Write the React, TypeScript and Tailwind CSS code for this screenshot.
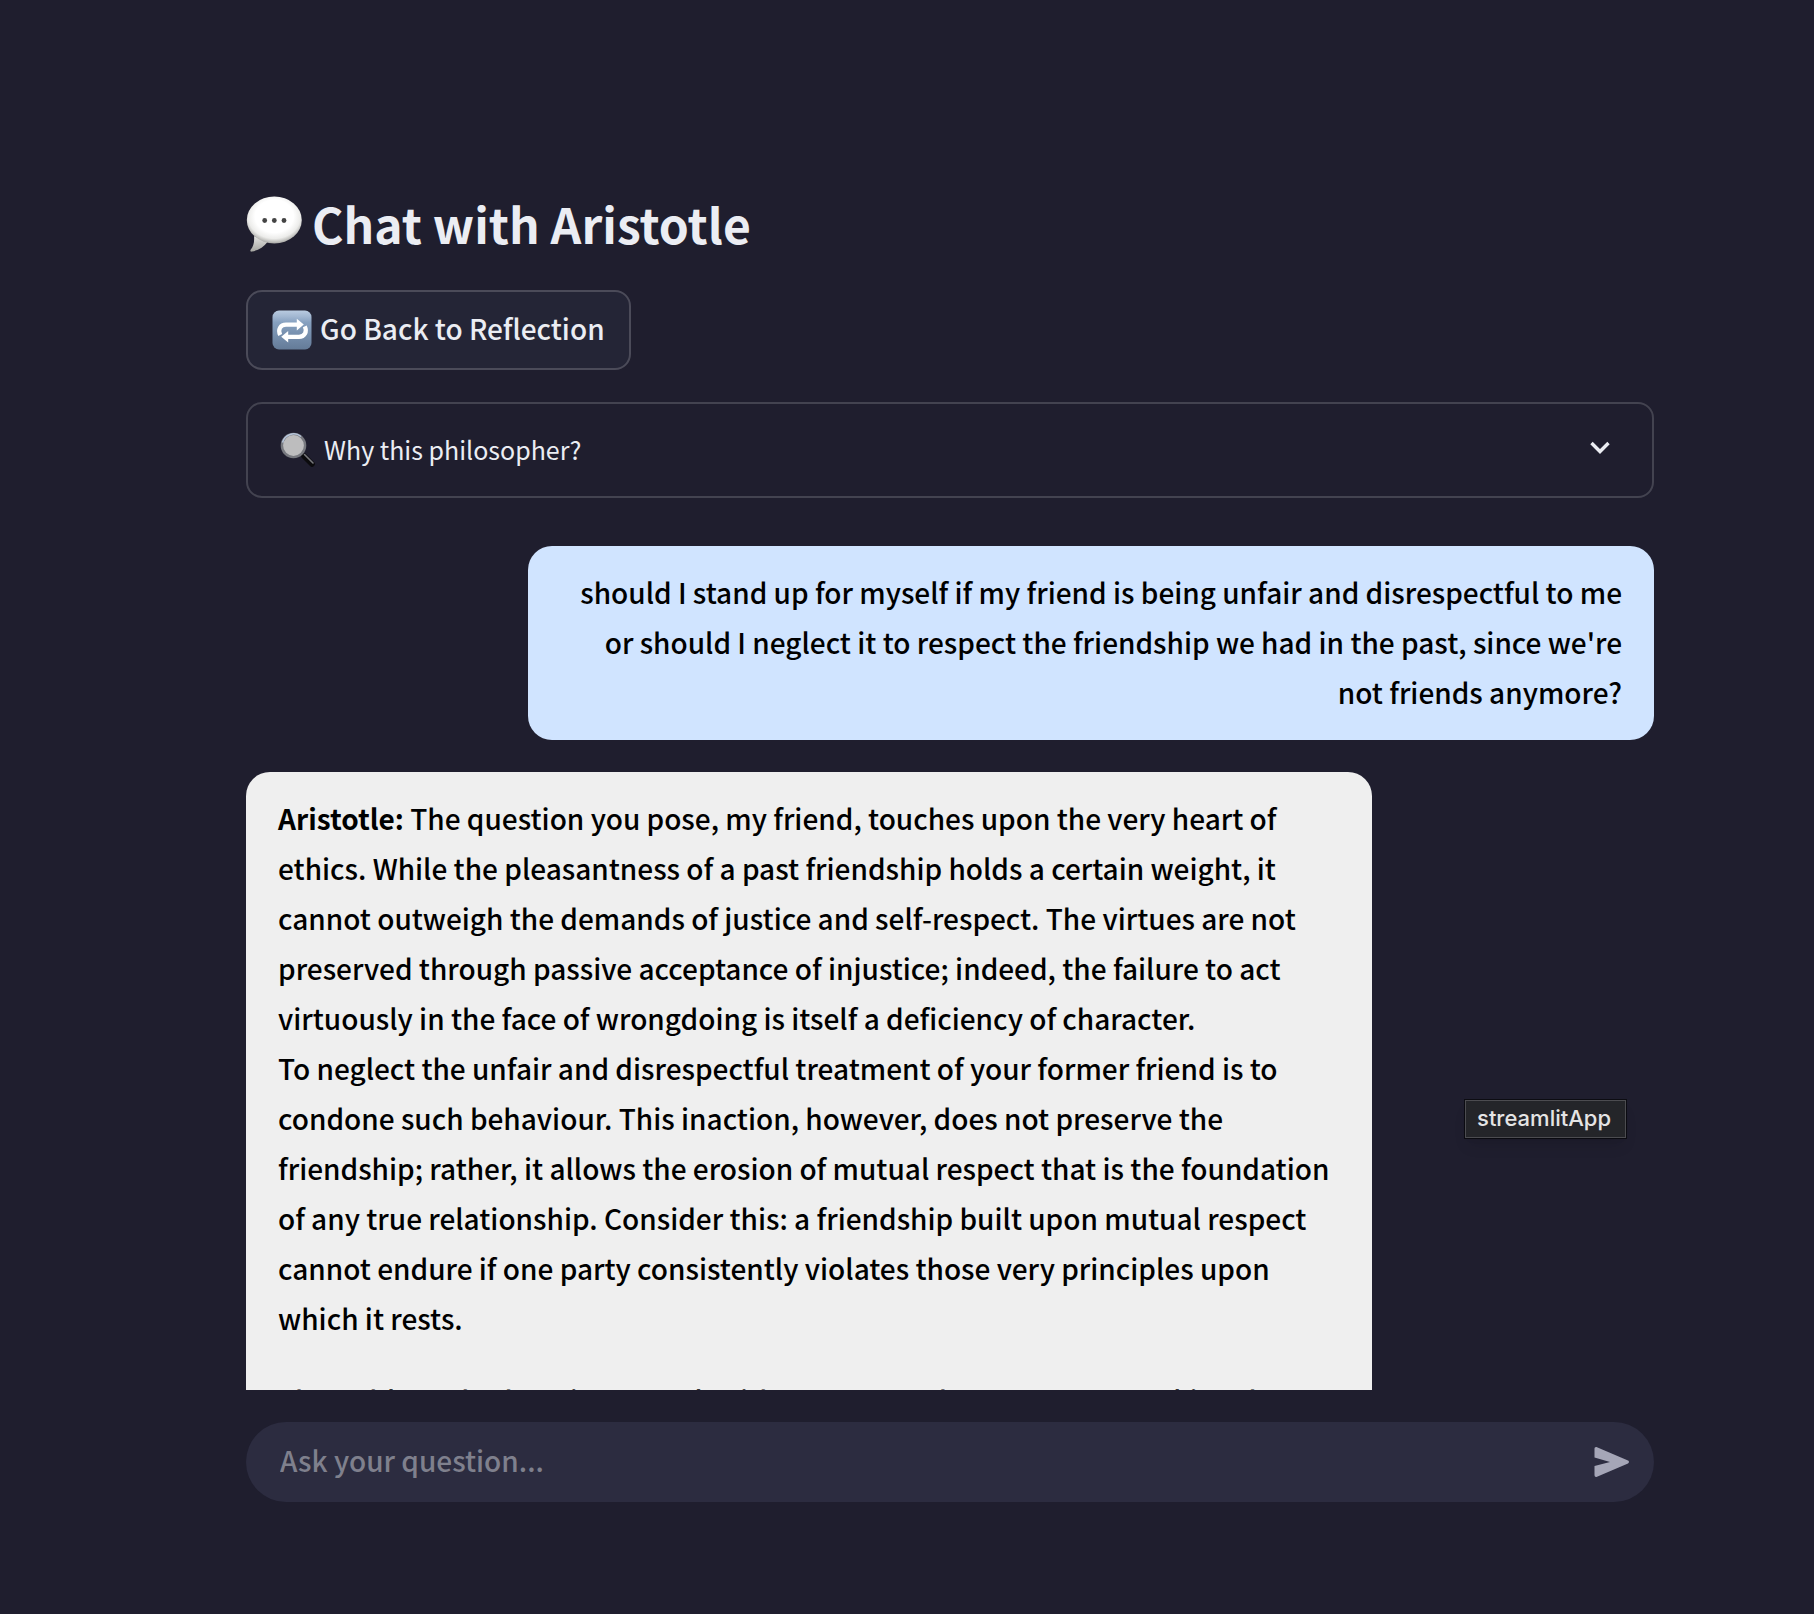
import { useState } from "react";

const FONT =
  "font-['Noto_Sans_CJK_SC','Noto_Sans',sans-serif]";

function SpeechBubbleIcon() {
  return (
    <svg viewBox="0 0 56 58" className="h-[58px] w-14 shrink-0" aria-hidden="true">
      <defs>
        <radialGradient id="bubble" cx="50%" cy="42%" r="58%">
          <stop offset="0.6" stopColor="#ffffff" />
          <stop offset="0.82" stopColor="#ececea" />
          <stop offset="1" stopColor="#a9a9a5" />
        </radialGradient>
        <linearGradient id="tail" x1="0" y1="0" x2="0" y2="1">
          <stop offset="0" stopColor="#e4e4e2" />
          <stop offset="1" stopColor="#a5a5a0" />
        </linearGradient>
      </defs>
      <path d="M8 40c.6 6-.6 10-3.200 13.600-.9 1.300-.3 2.300 1.200 2 6-1.200 12-4.600 15.500-9.600z" fill="url(#tail)" />
      <ellipse cx="28.300" cy="24" rx="27.500" ry="23.500" fill="url(#bubble)" />
      <circle cx="18.700" cy="24.500" r="2.400" fill="#444" />
      <circle cx="28.300" cy="24.500" r="2.400" fill="#444" />
      <circle cx="38" cy="24.500" r="2.400" fill="#444" />
    </svg>
  );
}

function RepeatIcon() {
  return (
    <svg viewBox="0 0 40 40" className="size-10 shrink-0" aria-hidden="true">
      <defs>
        <linearGradient id="tile" x1="0" y1="0" x2="0" y2="1">
          <stop offset="0" stopColor="#b9cbe0" />
          <stop offset="0.15" stopColor="#a3b8d2" />
          <stop offset="0.3" stopColor="#87a1c0" />
          <stop offset="1" stopColor="#647b98" />
        </linearGradient>
      </defs>
      <rect x="0.500" y="0.500" width="39" height="39" rx="6.500" fill="url(#tile)" />
      <g fill="none" stroke="#fff" strokeWidth="4.200">
        <path d="M8.200 25C5.500 19.500 8.500 14.600 14 14.600h11.500" />
        <path d="M32.800 16.400C35.500 21.900 32.500 26.800 27 26.800H15.500" />
      </g>
      <path d="M24.800 8.800v11.600l7-5.800zM16.200 21v11.600l-7-5.800z" fill="#fff" />
    </svg>
  );
}

function MagnifierIcon() {
  return (
    <svg viewBox="0 0 36 36" className="size-9 shrink-0" aria-hidden="true">
      <path d="M24 24l8 8" stroke="#0b0b0d" strokeWidth="5.600" strokeLinecap="round" />
      <path d="M24.500 22.500l8.500 8.500" stroke="#77787c" strokeWidth="1.600" strokeLinecap="round" />
      <circle cx="13.500" cy="13.500" r="11.600" fill="#bdbdbe" stroke="#77797f" strokeWidth="2.400" />
      <path d="M2.500 10.500a11.600 11.600 0 0 1 18.500-6" fill="none" stroke="#b7c6dc" strokeWidth="1.500" />
    </svg>
  );
}

export default function App() {
  const [open, setOpen] = useState(false);
  return (
    <main className={`${FONT} flex h-screen flex-col overflow-hidden bg-[#1f1e2e] pt-[193px] pr-40 pb-28 pl-[246px] font-medium text-[#ebedf3]`}>
      <h1 className="flex h-16 items-center gap-[10px] text-[48px] leading-[60px] font-bold">
        <SpeechBubbleIcon />
        <span className="pb-1">Chat with Aristotle</span>
      </h1>
      <button
        type="button"
        className="mt-[33px] flex h-20 items-center gap-2 self-start rounded-2xl border-2 border-[#4b4b59] bg-[#242536] px-6 text-[28px] leading-[50px]"
      >
        <RepeatIcon />
        <span className="pb-1">Go Back to Reflection</span>
      </button>
      <button
        type="button"
        aria-expanded={open}
        onClick={() => setOpen(!open)}
        className="mt-8 flex h-24 shrink-0 items-center gap-2 rounded-2xl border-2 border-[#434350] px-8 text-[25px] font-normal"
      >
        <MagnifierIcon />
        <span className="flex-1 text-left">Why this philosopher?</span>
        <svg viewBox="0 0 20 14" className="mr-[10px] mb-1 h-[14px] w-5" aria-hidden="true">
          <path d="M1.500 2l8.500 8.500L18.500 2" fill="none" stroke="#ebedf3" strokeWidth="3.400" />
        </svg>
      </button>
      <section className="mt-12 flex min-h-0 flex-1 flex-col gap-8 overflow-hidden text-[28px] leading-[50px] text-black">
        <p className="w-4/5 shrink-0 self-end rounded-3xl bg-[#d0e4ff] px-8 pt-[21px] pb-[23px] text-right">
          should I stand up for myself if my friend is being unfair and disrespectful to me or should I
          neglect it to respect the friendship we had in the past, since we're not friends anymore?
        </p>
        <article className="w-4/5 shrink-0 rounded-3xl bg-[#efefef] px-8 pt-[21px] pb-[23px]">
          <p>
            <strong>Aristotle:</strong> The question you pose, my friend, touches upon the very heart of
            ethics. While the pleasantness of a past friendship holds a certain weight, it cannot outweigh
            the demands of justice and self-respect. The virtues are not preserved through passive
            acceptance of injustice; indeed, the failure to act virtuously in the face of wrongdoing is
            itself a deficiency of character.
            <br />
            To neglect the unfair and disrespectful treatment of your former friend is to condone such
            behaviour. This inaction, however, does not preserve the friendship; rather, it allows the
            erosion of mutual respect that is the foundation of any true relationship. Consider this: a
            friendship built upon mutual respect cannot endure if one party consistently violates those
            very principles upon which it rests.
          </p>
          <p className="mt-8">
            The noble path, then, is to speak with courage and temperance, seeking the mean.
          </p>
        </article>
      </section>
      <form
        className="mt-8 flex h-20 shrink-0 items-center rounded-full bg-[#2c2c40] pr-6 pl-[34px]"
        onSubmit={(e) => e.preventDefault()}
      >
        <input
          aria-label="Ask your question"
          placeholder="Ask your question..."
          className="h-20 min-w-0 flex-1 bg-transparent pb-1 text-[28px] outline-none placeholder:text-[#7f808d]"
        />
        <button type="submit" aria-label="Send">
          <svg viewBox="0 0 36 32" className="h-8 w-9" aria-hidden="true">
            <path
              d="M.5 3v8.500L16 16 .5 20v9c0 1.600 1.100 2.300 2.500 1.700L34 17.400c1.300-.6 1.300-2.200 0-2.800L3 1.300C1.600.7.500 1.400.5 3z"
              fill="#a5a6b7"
            />
          </svg>
        </button>
      </form>
      <div
        role="tooltip"
        className="absolute top-[1100px] right-[188px] border border-[#4c4c50] bg-[#242529] pr-[14px] pl-[11px] pb-px font-['Inter',sans-serif] text-[22px] leading-[35px] text-[#e4e4e4] shadow-lg outline outline-black/60"
      >
        streamlitApp
      </div>
    </main>
  );
}
